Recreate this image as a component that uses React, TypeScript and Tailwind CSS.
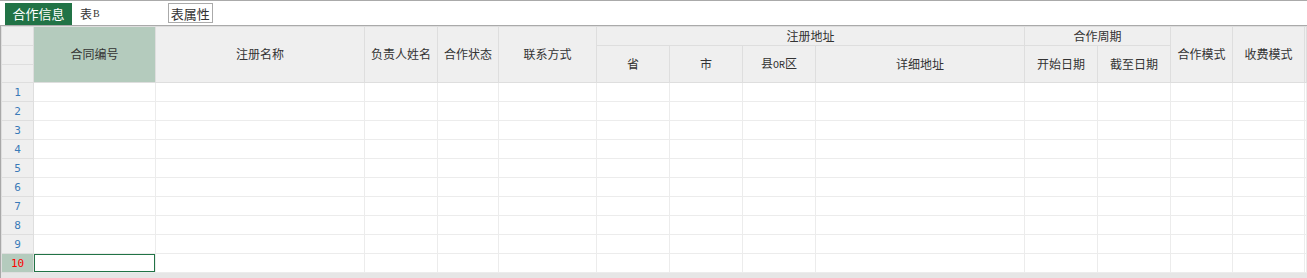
import React from 'react';

type Col = { key: string; label: string; width: number };

// column widths of the sheet, left to right (row-number column excluded)
const columns: Col[] = [
  { key: 'contractNo', label: '合同编号', width: 122 },
  { key: 'regName', label: '注册名称', width: 209 },
  { key: 'owner', label: '负责人姓名', width: 73 },
  { key: 'status', label: '合作状态', width: 61 },
  { key: 'contact', label: '联系方式', width: 98 },
  { key: 'province', label: '省', width: 73 },
  { key: 'city', label: '市', width: 73 },
  { key: 'county', label: '县OR区', width: 73 },
  { key: 'address', label: '详细地址', width: 209 },
  { key: 'start', label: '开始日期', width: 73 },
  { key: 'end', label: '截至日期', width: 73 },
  { key: 'mode', label: '合作模式', width: 62 },
  { key: 'fee', label: '收费模式', width: 72 },
];

const rows = Array.from({ length: 10 }, (_, i) => i + 1);
const selectedRow = 10;

const headCell = 'border border-[#dedede] bg-[#efefef] text-[12px] text-[#333] font-normal text-center align-middle p-0 leading-none';

const App: React.FC = () => {
  return (
    <div className="w-[1307px] h-[278px] overflow-hidden bg-white font-['Noto_Sans_CJK_SC',sans-serif] text-[#333]">
      {/* Sheet tabs */}
      <div className="h-[26px] border-t border-b border-[#aaaaaa] flex items-start">
        <div className="ml-[5px] mt-[2px] w-[67px] h-[22px] bg-[#217346] text-white text-[13px] flex items-center justify-center">
          合作信息
        </div>
        <div className="ml-[8px] mt-[2px] h-[21px] flex items-center text-[12px]">
          表<span className="font-['Liberation_Serif',serif] text-[10px] ml-px">B</span>
        </div>
        <button className="ml-[68px] mt-[2px] h-[20px] px-[2px] border border-[#aaaaaa] bg-white text-[13px] leading-none flex items-center">
          表属性
        </button>
      </div>

      {/* Grid */}
      <div className="border-l border-[#a8a8a8]">
        <table className="table-fixed border-collapse w-[1306px]">
          <colgroup>
            <col className="w-[32px]" />
            {columns.map((c) => (
              <col key={c.key} style={{ width: c.width }} />
            ))}
            <col />
          </colgroup>
          <thead>
            <tr className="h-[19px]">
              <th className={headCell} />
              <th rowSpan={3} className="border border-[#dedede] bg-[#b4cbbd] text-[12px] text-[#333] font-normal text-center leading-none pb-[2px]">
                {columns[0].label}
              </th>
              {columns.slice(1, 5).map((c) => (
                <th key={c.key} rowSpan={3} className={`${headCell} pb-[2px]`}>
                  {c.label}
                </th>
              ))}
              <th colSpan={4} className={headCell}>注册地址</th>
              <th colSpan={2} className={headCell}>合作周期</th>
              {columns.slice(11).map((c) => (
                <th key={c.key} rowSpan={3} className={`${headCell} pb-[2px]`}>
                  {c.label}
                </th>
              ))}
              <th rowSpan={3} className={headCell} />
            </tr>
            <tr className="h-[19px]">
              <th className={headCell} />
              {columns.slice(5, 11).map((c) => (
                <th key={c.key} rowSpan={2} className={headCell}>
                  {c.key === 'county' ? (
                    <>
                      县<span className="font-['Liberation_Mono',monospace] text-[10px]">OR</span>区
                    </>
                  ) : (
                    c.label
                  )}
                </th>
              ))}
            </tr>
            <tr className="h-[18px]">
              <th className={headCell} />
            </tr>
          </thead>
          <tbody>
            {rows.map((r) => {
              const active = r === selectedRow;
              return (
                <tr key={r} className="h-[19px]">
                  <td
                    className={`border border-[#dedede] text-center text-[11px] leading-none font-['DejaVu_Sans_Mono',monospace] p-0 ${
                      active ? 'bg-[#b4cbbd] text-[#ff0000]' : 'bg-[#efefef] text-[#3a7ab8]'
                    }`}
                  >
                    {r}
                  </td>
                  {columns.map((c, i) => (
                    <td
                      key={c.key}
                      className={`border border-[#ececec] p-0 ${
                        active && i === 0 ? 'shadow-[inset_0_0_0_1px_#217346]' : ''
                      }`}
                    />
                  ))}
                  <td className="border border-[#ececec] p-0" />
                </tr>
              );
            })}
          </tbody>
        </table>
        {/* horizontal scroll track */}
        <div className="h-[8px] bg-[#e6e6e6]" />
      </div>
    </div>
  );
};

export default App;
